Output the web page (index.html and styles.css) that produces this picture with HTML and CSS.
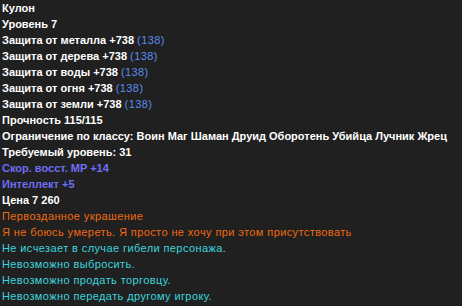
FILE: index.html
```html
<!DOCTYPE html>
<html lang="ru">
<head>
<meta charset="utf-8">
<link rel="stylesheet" href="styles.css">
</head>
<body>
<div class="tip">
  <div class="line b">Кулон</div>
  <div class="line b">Уровень 7</div>
  <div class="line b">Защита от металла +738 <span class="base">(138)</span></div>
  <div class="line b">Защита от дерева +738 <span class="base">(138)</span></div>
  <div class="line b">Защита от воды +738 <span class="base">(138)</span></div>
  <div class="line b">Защита от огня +738 <span class="base">(138)</span></div>
  <div class="line b">Защита от земли +738 <span class="base">(138)</span></div>
  <div class="line b">Прочность 115/115</div>
  <div class="line b">Ограничение по классу: Воин Маг Шаман Друид Оборотень Убийца Лучник Жрец</div>
  <div class="line b">Требуемый уровень: 31</div>
  <div class="line b stat">Скор. восст. MP +14</div>
  <div class="line b stat">Интеллект +5</div>
  <div class="line b">Цена 7 260</div>
  <div class="line orange">Первозданное украшение</div>
  <div class="line orange">Я не боюсь умереть. Я просто не хочу при этом присутствовать</div>
  <div class="line cyan">Не исчезает в случае гибели персонажа.</div>
  <div class="line cyan">Невозможно выбросить.</div>
  <div class="line cyan">Невозможно продать торговцу.</div>
  <div class="line cyan">Невозможно передать другому игроку.</div>
</div>
</body>
</html>
```

FILE: styles.css
```css
html, body {
  margin: 0;
  padding: 0;
  background: #202020;
}
.tip {
  width: 462px;
  height: 306px;
  box-sizing: border-box;
  padding: 0 2px;
  font-family: "Liberation Sans", Arial, sans-serif;
  font-size: 11px;
  line-height: 16px;
  color: #ffffff;
  background: #202020;
}
.line {
  white-space: nowrap;
  letter-spacing: 0.4px;
}
.b {
  font-weight: bold;
  letter-spacing: 0;
}
.base {
  color: #5b8cf0;
  font-weight: normal;
  letter-spacing: 0.4px;
}
.stat {
  color: #6e6ef5;
}
.orange {
  color: #f06a10;
}
.cyan {
  color: #3cd4dc;
}
```
